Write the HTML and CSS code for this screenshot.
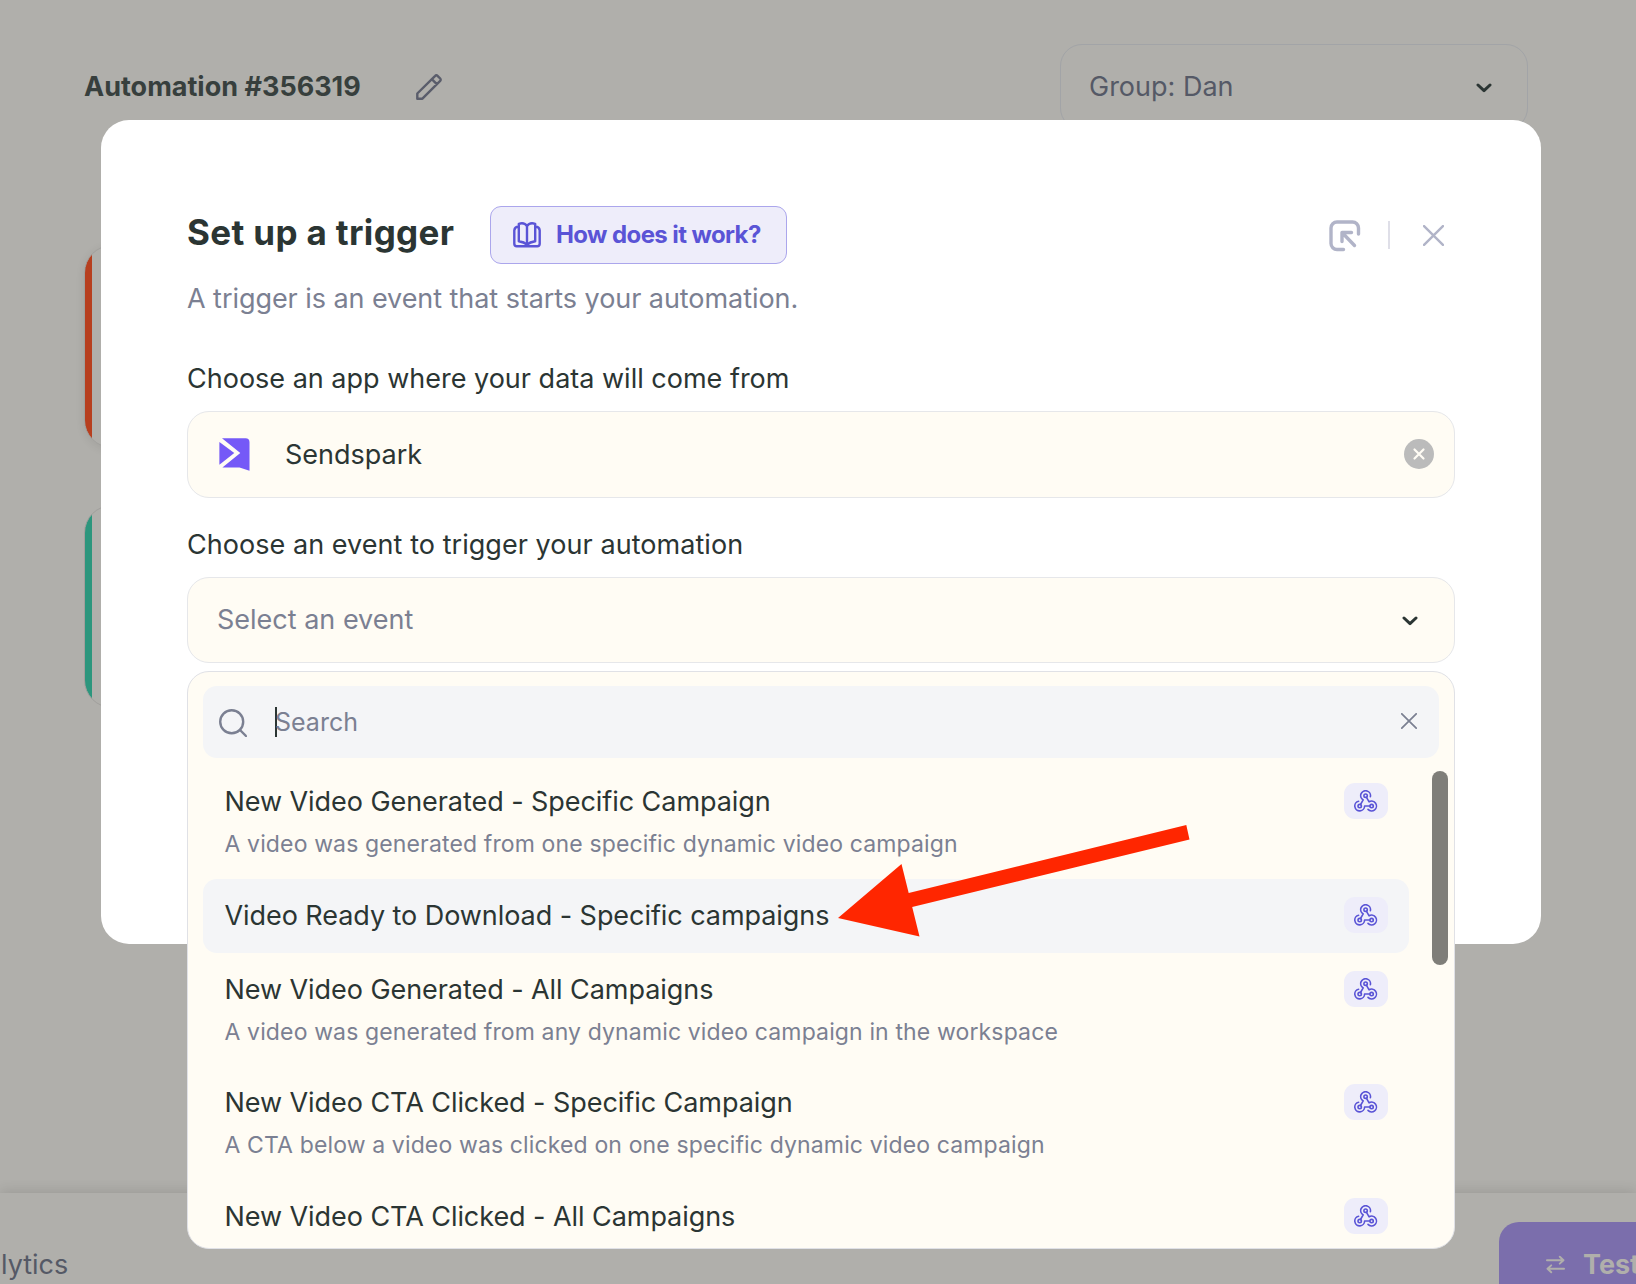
FILE: index.html
```html
<!DOCTYPE html>
<html lang="en">
<head>
    <meta charset="UTF-8">
    <meta name="viewport" content="width=device-width, initial-scale=1.0">
    <title>Automation #356319</title>
    <link rel="stylesheet" href="styles.css">
</head>
<body>
    <svg width="0" height="0" class="sprite">
        <symbol id="webhook" viewBox="0 0 24 22">
            <path d="M16.400 6.600A4.900 4.900 0 1 0 9.200 9.900L6.500 14.500"/>
            <path d="M12.500 7.300L15.100 11.800A4.900 4.900 0 1 1 14 19.400"/>
            <path d="M4.600 11.200A4.900 4.900 0 1 0 10.600 16H15.800"/>
            <circle cx="11.600" cy="5.700" r="1.700"/>
            <circle cx="5.700" cy="16.100" r="1.700"/>
            <circle cx="17.600" cy="16.100" r="1.700"/>
        </symbol>
        <symbol id="chevron" viewBox="0 0 16 10">
            <path d="M2 2l6 5.6L14 2"/>
        </symbol>
        <symbol id="cross" viewBox="0 0 20 20">
            <path d="M1 1l18 18M19 1L1 19"/>
        </symbol>
    </svg>

    <div class="page">
        <div class="topbar">
            <h2 class="automation-name">Automation #356319</h2>
            <svg class="pencil" viewBox="0 0 26 26"><path d="M1.3 24.7v-5.2L19.2 1.8a1.6 1.6 0 0 1 2.3 0l2.7 2.7a1.6 1.6 0 0 1 0 2.3L6.4 24.7zM15.8 5.2l5 5"/></svg>
            <div class="group-select">
                <span>Group: Dan</span>
                <svg class="chevron"><use href="#chevron"/></svg>
            </div>
        </div>
        <div class="steps">
            <div class="step step-trigger"></div>
            <div class="step step-action"></div>
        </div>
        <div class="footer">
            <span class="footer-link">lytics</span>
            <div class="test-btn">
                <svg class="swap" viewBox="0 0 20 20"><path d="M1 5.5h17M14.5 1.8L18.4 5.5l-3.9 3.6M19 14.5H2M5.5 10.9L1.6 14.5l3.9 3.7"/></svg>
                <span>Test</span>
            </div>
        </div>
    </div>

    <div class="modal">
        <div class="modal-header">
            <h1>Set up a trigger</h1>
            <button class="help-btn">
                <svg class="book" viewBox="0 0 28 26"><path d="M14 4.200C12.500 1.600 9.300 .8 5.800 1.800v17.400c3.200 .5 6.200 1.600 8.200 3.400 2-1.800 5-2.900 8.200-3.400V1.800C18.700 .8 15.500 1.600 14 4.200zM14 4.200v18.400M5.300 4.800a4 4 0 0 0-4 3.500v13.400a2.500 2.500 0 0 0 2.500 2.500h20.400a2.500 2.500 0 0 0 2.500-2.500V8.300a4 4 0 0 0-4-3.500"/></svg>
                <span>How does it work?</span>
            </button>
            <div class="modal-actions">
                <svg class="dock" viewBox="0 0 32 32"><path d="M14.500 29.500H8A6 6 0 0 1 2 23.500V8A6 6 0 0 1 8 2h15.500a6 6 0 0 1 6 6v6M13 21.500v-9h9.500M13.500 13l12 12.500"/></svg>
                <span class="divider"></span>
                <svg class="close"><use href="#cross"/></svg>
            </div>
        </div>
        <p class="subtitle">A trigger is an event that starts your automation.</p>

        <label class="field-label">Choose an app where your data will come from</label>
        <div class="field field-app">
            <svg class="logo" viewBox="0 0 31 34"><path d="M3 .3h23.500a4 4 0 0 1 4 4V32.700l-10-3.200H3.400L21.300 15z"/><path d="M.4 4.100L15.300 15 .4 26.700z"/></svg>
            <span class="app-name">Sendspark</span>
            <svg class="clear" viewBox="0 0 30 30"><circle cx="15" cy="15" r="15"/><path d="M10.500 10.500l9 9M19.500 10.500l-9 9"/></svg>
        </div>

        <label class="field-label field-label-event">Choose an event to trigger your automation</label>
        <div class="field field-event">
            <span class="placeholder">Select an event</span>
            <svg class="chevron"><use href="#chevron"/></svg>

            <div class="dropdown">
                <div class="search">
                    <svg class="magnifier" viewBox="0 0 28 28"><circle cx="12.700" cy="12.700" r="11.500"/><path d="M21 21l6 6"/></svg>
                    <span class="caret"></span>
                    <span class="search-text">Search</span>
                    <svg class="search-clear"><use href="#cross"/></svg>
                </div>
                <div class="list">
                    <div class="item">
                        <div>
                            <div class="item-title">New Video Generated - Specific Campaign</div>
                            <div class="item-desc">A video was generated from one specific dynamic video campaign</div>
                        </div>
                        <span class="badge"><svg><use href="#webhook"/></svg></span>
                    </div>
                    <div class="item active">
                        <div class="item-title">Video Ready to Download - Specific campaigns</div>
                        <span class="badge"><svg><use href="#webhook"/></svg></span>
                    </div>
                    <div class="item">
                        <div>
                            <div class="item-title">New Video Generated - All Campaigns</div>
                            <div class="item-desc">A video was generated from any dynamic video campaign in the workspace</div>
                        </div>
                        <span class="badge"><svg><use href="#webhook"/></svg></span>
                    </div>
                    <div class="item">
                        <div>
                            <div class="item-title">New Video CTA Clicked - Specific Campaign</div>
                            <div class="item-desc">A CTA below a video was clicked on one specific dynamic video campaign</div>
                        </div>
                        <span class="badge"><svg><use href="#webhook"/></svg></span>
                    </div>
                    <div class="item">
                        <div class="item-title">New Video CTA Clicked - All Campaigns</div>
                        <span class="badge"><svg><use href="#webhook"/></svg></span>
                    </div>
                </div>
                <div class="scrollbar"></div>
            </div>
        </div>
    </div>

    <svg class="arrow" viewBox="0 0 352 112"><path d="M0 54L63.500 0 70.700 29 348.300 -39 351.500 -24.500 74.200 43 81.500 72.500z" transform="translate(0 39)"/></svg>
</body>
</html>
```

FILE: styles.css
```css
* {
    margin: 0;
    padding: 0;
    box-sizing: border-box;
}

body {
    width: 1636px;
    height: 1284px;
    position: relative;
    overflow: hidden;
    font-family: Inter, 'Liberation Sans', sans-serif;
    font-size: 27px;
    color: #2b3533;
    background: #b0afab;
}

svg {
    display: block;
    flex: none;
    fill: none;
    stroke: currentColor;
    stroke-linecap: round;
    stroke-linejoin: round;
}

span {
    white-space: nowrap;
}

.sprite {
    position: absolute;
}

/* page behind the modal */
.page {
    height: 1284px;
    display: flex;
    flex-direction: column;
}

.topbar {
    display: flex;
    align-items: center;
    height: 86px;
    margin: 44px 108px 0 84px;
    flex: none;
}

.automation-name {
    width: 332px;
    padding-bottom: 2px;
    font-size: 27px;
    font-weight: 700;
    color: #373f3d;
    white-space: nowrap;
}

.pencil {
    width: 26px;
    height: 26px;
    stroke-width: 2.4;
    color: #5a5d6b;
}

.group-select {
    display: flex;
    align-items: center;
    justify-content: space-between;
    width: 468px;
    height: 86px;
    margin-left: auto;
    padding: 0 35px 0 28px;
    border: 1px solid #a2a4a7;
    border-radius: 22px;
    color: #555966;
}

.group-select span {
    padding-bottom: 2px;
}

.chevron {
    width: 16px;
    height: 10px;
    margin-top: 1px;
    stroke-width: 3;
    color: #2b3533;
}

.steps {
    display: flex;
    flex-direction: column;
    gap: 57px;
    padding: 115px 0 0 84px;
}

.step {
    width: 600px;
    height: 203px;
    border-radius: 28px;
    border: 1px solid #a09f9c;
    box-shadow: 0 2px 10px rgba(0, 0, 0, 0.08);
}

.step-trigger {
    background: linear-gradient(90deg, #b73f1f 7px, #b0afab 7px);
}

.step-action {
    background: linear-gradient(90deg, #2c967d 7px, #b0afab 7px);
    box-shadow: none;
}

.footer {
    display: flex;
    justify-content: space-between;
    height: 91px;
    margin-top: auto;
    padding-top: 29px;
    box-shadow: 0 -2px 12px rgba(0, 0, 0, 0.12);
}

.footer-link {
    padding-left: 1px;
    line-height: 86px;
    color: #555966;
}

.test-btn {
    display: flex;
    align-items: center;
    gap: 18px;
    width: 137px;
    height: 86px;
    padding: 0 0 1px 47px;
    overflow: hidden;
    border-radius: 20px 0 0 0;
    background: #7b6eac;
    color: #b0afab;
    font-weight: 700;
}

.swap {
    width: 19px;
    height: 19px;
    stroke-width: 2;
}

/* modal */
.modal {
    position: absolute;
    left: 101px;
    top: 120px;
    width: 1440px;
    height: 824px;
    padding: 86px;
    border-radius: 28px;
    background: #fff;
}

.modal-header {
    display: flex;
    align-items: center;
    height: 58px;
}

.modal-header h1 {
    width: 303px;
    font-size: 35px;
    font-weight: 700;
    line-height: 52px;
    letter-spacing: 0.35px;
    padding-bottom: 6px;
    white-space: nowrap;
}

.help-btn {
    display: flex;
    align-items: center;
    gap: 15px;
    width: 297px;
    height: 58px;
    padding: 0 0 1px 22px;
    border: 1px solid #aba6ec;
    border-radius: 11px;
    background: #eeedfa;
    color: #5a54d6;
    font: 700 24px Inter, sans-serif;
    letter-spacing: -0.6px;
}

.book {
    width: 28px;
    height: 26px;
    stroke-width: 2.4;
}

.modal-actions {
    display: flex;
    align-items: center;
    margin-left: auto;
    padding-right: 11px;
    color: #b1b4c8;
}

.dock {
    width: 32px;
    height: 32px;
    margin-top: 1px;
    stroke-width: 3.400;
}

.divider {
    width: 2px;
    height: 28px;
    margin: 0 33px 0 27px;
    background: #dfdfe8;
}

.close {
    width: 21px;
    height: 21px;
    stroke-width: 2.3;
}

.subtitle {
    margin-top: 18px;
    line-height: 34px;
    letter-spacing: -0.06px;
    color: #7b8092;
    white-space: nowrap;
}

.field-label {
    display: block;
    margin-top: 46px;
    line-height: 34px;
    white-space: nowrap;
}

.field-label-event {
    margin-top: 30px;
    letter-spacing: 0.05px;
}

.field {
    position: relative;
    display: flex;
    align-items: center;
    border: 1px solid #e6e7ea;
    border-radius: 22px;
    background: #fffcf4;
}

.field-app {
    height: 87px;
    margin-top: 15px;
    padding: 0 20px 0 31px;
}

.logo {
    width: 31px;
    height: 34px;
    fill: #7559f7;
    stroke: none;
}

.app-name {
    margin-left: 35px;
}

.clear {
    width: 30px;
    height: 30px;
    margin: 0 0 1px auto;
    fill: #bbb;
    stroke: none;
}

.clear path {
    stroke: #fffcf4;
    stroke-width: 2.2;
}

.field-event {
    height: 86px;
    margin-top: 15px;
    padding: 0 36px 0 29px;
    justify-content: space-between;
}

.placeholder {
    padding-bottom: 2px;
    color: #7b8092;
}

/* event list, opens under the select */
.dropdown {
    position: absolute;
    left: -1px;
    top: 93px;
    width: 1268px;
    height: 578px;
    padding: 14px 15px 0;
    overflow: hidden;
    border: 1px solid #e0e1e6;
    border-radius: 22px;
    background: #fffcf4;
}

.search {
    display: flex;
    align-items: center;
    height: 72px;
    padding: 0 22px 0 16px;
    border-radius: 14px;
    background: #f4f5f7;
    color: #7b8092;
    font-size: 25px;
}

.magnifier {
    width: 28px;
    height: 28px;
    margin-top: 1px;
    stroke-width: 2.4;
}

.caret {
    width: 2px;
    height: 30px;
    margin-left: 28px;
    background: #2b3533;
}

.search-text {
    margin-left: -2px;
}

.search-clear {
    width: 16px;
    height: 16px;
    margin: 0 0 2px auto;
    stroke-width: 2.2;
}

.list {
    width: 1206px;
    padding-top: 7px;
}

.item {
    display: flex;
    align-items: flex-start;
    justify-content: space-between;
    padding: 18px 21px 19px 22px;
    border-radius: 14px;
    white-space: nowrap;
}

.item.active {
    background: #f4f5f7;
}

.item-title {
    height: 37px;
    margin-left: -0.5px;
    line-height: 38px;
    letter-spacing: -0.06px;
}

.item-desc {
    height: 39.7px;
    margin-left: -0.5px;
    padding-top: 8px;
    font-size: 23px;
    line-height: 32px;
    letter-spacing: 0.135px;
    color: #7b8092;
}

.badge {
    display: flex;
    align-items: center;
    justify-content: center;
    width: 44px;
    height: 36px;
    border-radius: 11px;
    background: #eeedfa;
    color: #5a54d6;
}

.badge svg {
    width: 24px;
    height: 22px;
    stroke-width: 1.6;
}

.scrollbar {
    position: absolute;
    right: 6px;
    top: 99px;
    width: 16px;
    height: 194px;
    border-radius: 8px;
    background: #7f7e79;
}

.arrow {
    position: absolute;
    left: 838px;
    top: 825px;
    width: 352px;
    height: 112px;
    fill: #ff2600;
    stroke: none;
}
```
